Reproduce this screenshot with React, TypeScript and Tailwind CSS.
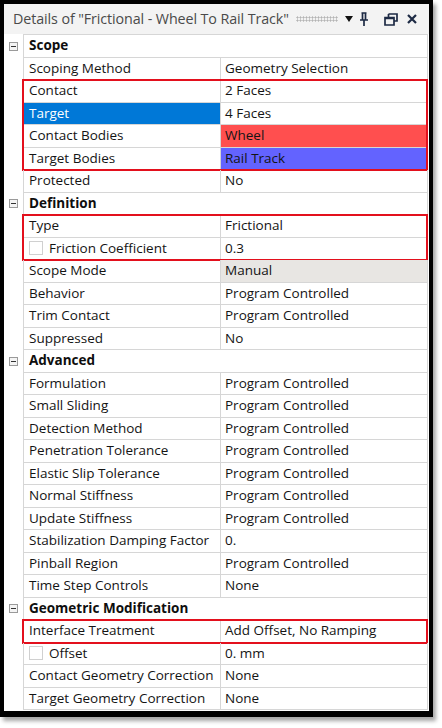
import React from "react";

type Row =
  | { kind: "section"; label: string }
  | {
      kind: "item";
      label: string;
      value: string;
      check?: boolean;
      labelClass?: string;
      valueClass?: string;
    };

type Group = { boxed?: boolean; rows: Row[] };

const groups: Group[] = [
  {
    rows: [
      { kind: "section", label: "Scope" },
      { kind: "item", label: "Scoping Method", value: "Geometry Selection" },
    ],
  },
  {
    boxed: true,
    rows: [
      { kind: "item", label: "Contact", value: "2 Faces" },
      {
        kind: "item",
        label: "Target",
        value: "4 Faces",
        labelClass: "bg-[#0078d7] text-white",
      },
      {
        kind: "item",
        label: "Contact Bodies",
        value: "Wheel",
        valueClass: "bg-[#ff4f4f]",
      },
      {
        kind: "item",
        label: "Target Bodies",
        value: "Rail Track",
        valueClass: "bg-[#6363ff]",
      },
    ],
  },
  {
    rows: [
      { kind: "item", label: "Protected", value: "No" },
      { kind: "section", label: "Definition" },
    ],
  },
  {
    boxed: true,
    rows: [
      { kind: "item", label: "Type", value: "Frictional" },
      { kind: "item", label: "Friction Coefficient", value: "0.3", check: true },
    ],
  },
  {
    rows: [
      {
        kind: "item",
        label: "Scope Mode",
        value: "Manual",
        valueClass: "bg-[#e8e6e3]",
      },
      { kind: "item", label: "Behavior", value: "Program Controlled" },
      { kind: "item", label: "Trim Contact", value: "Program Controlled" },
      { kind: "item", label: "Suppressed", value: "No" },
      { kind: "section", label: "Advanced" },
      { kind: "item", label: "Formulation", value: "Program Controlled" },
      { kind: "item", label: "Small Sliding", value: "Program Controlled" },
      { kind: "item", label: "Detection Method", value: "Program Controlled" },
      { kind: "item", label: "Penetration Tolerance", value: "Program Controlled" },
      { kind: "item", label: "Elastic Slip Tolerance", value: "Program Controlled" },
      { kind: "item", label: "Normal Stiffness", value: "Program Controlled" },
      { kind: "item", label: "Update Stiffness", value: "Program Controlled" },
      { kind: "item", label: "Stabilization Damping Factor", value: "0." },
      { kind: "item", label: "Pinball Region", value: "Program Controlled" },
      { kind: "item", label: "Time Step Controls", value: "None" },
      { kind: "section", label: "Geometric Modification" },
    ],
  },
  {
    boxed: true,
    rows: [
      { kind: "item", label: "Interface Treatment", value: "Add Offset, No Ramping" },
    ],
  },
  {
    rows: [
      { kind: "item", label: "Offset", value: "0. mm", check: true },
      { kind: "item", label: "Contact Geometry Correction", value: "None" },
      { kind: "item", label: "Target Geometry Correction", value: "None" },
    ],
  },
];

function MinusBox() {
  return (
    <div className="w-[9px] h-[9px] border border-[#9a9a9a] bg-[#f4f4f4] flex items-center justify-center">
      <div className="w-[5px] h-px bg-[#333]" />
    </div>
  );
}

function TableRow({ row }: { row: Row }) {
  if (row.kind === "section") {
    return (
      <div className="flex h-[22.5px]">
        <div className="w-[19px] flex items-center justify-center">
          <MinusBox />
        </div>
        <div className="flex-1 flex items-center pl-[5px] border-x border-b border-[#d6d6d6] font-bold text-[#0e0e0e]">
          {row.label}
        </div>
      </div>
    );
  }
  return (
    <div className="flex h-[22.5px]">
      <div className="w-[19px]" />
      <div className="flex-1 flex border-x border-b border-[#d6d6d6]">
        <div
          className={`w-[197px] shrink-0 flex items-center pl-[5px] whitespace-nowrap border-r border-[#d6d6d6] ${
            row.labelClass ?? "text-[#141414]"
          }`}
        >
          {row.check && (
            <span className="w-[14px] h-[14px] border border-[#d0d0d0] bg-white mr-[6px]" />
          )}
          {row.label}
        </div>
        <div
          className={`flex-1 flex items-center pl-[4px] text-[#141414] ${
            row.valueClass ?? ""
          }`}
        >
          {row.value}
        </div>
      </div>
    </div>
  );
}

function Grip() {
  return (
    <div className="w-[42px] h-[6px] bg-[radial-gradient(circle,#b4b4b4_0.9px,transparent_1.2px)] bg-[length:3px_3px]" />
  );
}

export default function App() {
  return (
    <div className="w-[442px] h-[728px] bg-white">
      <div
        className="w-[433px] h-[717px] border-black border-l-4 border-r-4 border-t-4 border-b-[6px] bg-white shadow-[3px_4px_4px_rgba(0,0,0,0.35)] flex flex-col text-[13.5px] leading-none"
        style={{ fontFamily: '"Open Sans", "Noto Sans", sans-serif' }}
      >
        {/* title bar */}
        <div className="h-[30px] shrink-0 flex items-center bg-[#f3f3f3] pl-[9px] pr-[12px]">
          <span className="text-[14.3px] text-[#4a4a4a] whitespace-nowrap tracking-[-0.1px]">
            Details of "Frictional - Wheel To Rail Track"
          </span>
          <div className="ml-[7px] flex-1">
            <Grip />
          </div>
          <div className="flex items-center">
            <svg width="8" height="6" viewBox="0 0 8 6">
              <path d="M0 0h8L4 6z" fill="#111" />
            </svg>
            <svg className="ml-[7px]" width="8" height="14" viewBox="0 0 8 14">
              <path
                d="M1.5 1h5M2.5 1v7M5.5 1v7M0 8h8M4 8v6"
                stroke="#1d2a44"
                strokeWidth="1.7"
                fill="none"
              />
            </svg>
            <svg className="ml-[16px]" width="14" height="13" viewBox="0 0 14 13">
              <path
                d="M4.5 1h8.5v7h-3M4.5 1v3.5M1 4.5h9v7.5H1z M1 5.5h9"
                stroke="#1d2a44"
                strokeWidth="1.7"
                fill="none"
              />
            </svg>
            <svg className="ml-[9px]" width="10" height="10" viewBox="0 0 10 10">
              <path
                d="M1 1l8 8M9 1l-8 8"
                stroke="#1d2a44"
                strokeWidth="2.2"
                fill="none"
              />
            </svg>
          </div>
        </div>

        {/* property grid */}
        <div className="pr-px">
          <div className="ml-[19px] border-t border-[#d6d6d6]" />
          {groups.map((g, gi) => (
            <div key={gi} className="relative">
              {g.rows.map((r, ri) => (
                <TableRow key={ri} row={r} />
              ))}
              {g.boxed && (
                <div className="absolute left-[18px] right-0 top-[-1px] bottom-[-1px] border-2 border-[#e3101d] pointer-events-none" />
              )}
            </div>
          ))}
        </div>
      </div>
    </div>
  );
}
